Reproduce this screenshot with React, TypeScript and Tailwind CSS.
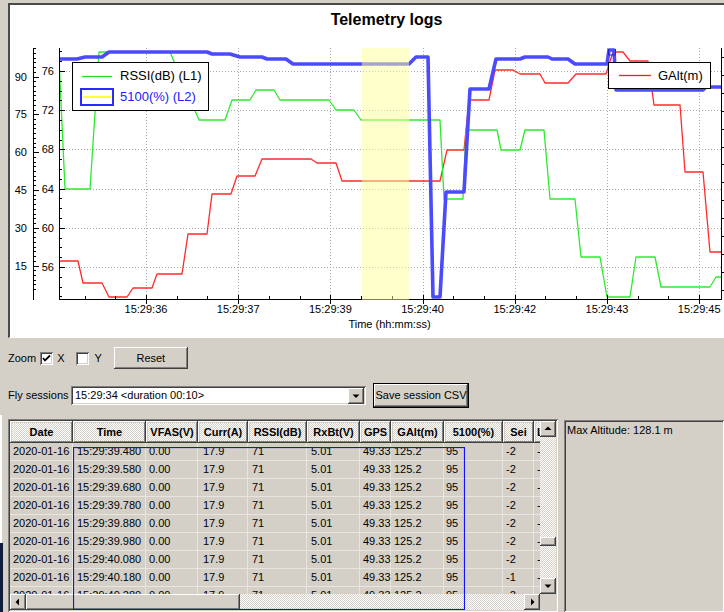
import React from "react";

const raised =
  "shadow-[inset_-1px_-1px_#404040,inset_1px_1px_#ffffff,inset_-2px_-2px_#808080,inset_2px_2px_#d4d0c8]";
const sunken =
  "shadow-[inset_1px_1px_#808080,inset_-1px_-1px_#ffffff,inset_2px_2px_#404040,inset_-2px_-2px_#d4d0c8]";
const checker =
  "bg-[image:repeating-conic-gradient(#ffffff_0_25%,#d4d0c8_0_50%)] bg-[length:2px_2px]";

// chart data, in page pixels
const bluePts =
  "59,59 77,59 85,57 102,57 109,52 207,52 212,54 230,54 240,57 262,57 267,59 286,59 293,64 409,64 416,57 428,57 433,297 440,297 446,192 464,192 470,89 489,89 496,59 520,59 525,57 548,57 552,59 568,59 575,64 607,64 609,50 614,50 616,90 703,90 706,87 724,87";
const greenPts =
  "59,59 65,189 90,189 99,52 170,52 199,120 225,120 232,100 250,100 256,90 274,90 280,100 329,100 336,110 354,110 361,120 440,120 444,199 463,199 466,130 497,130 501,150 520,150 525,130 544,130 550,199 575,199 581,257 600,257 607,297 630,297 636,257 655,257 661,287 710,287 716,277 724,277";
const redPts =
  "59,261 78,261 83,283 102,283 109,297 127,297 133,288 152,288 157,274 182,274 188,234 207,234 212,194 231,194 237,176 255,176 262,159 311,159 317,163 336,163 342,181 440,181 447,150 464,150 469,100 489,100 495,70 513,70 520,74 540,74 545,83 568,83 576,74 606,74 613,52 623,52 630,61 648,61 654,105 680,105 685,172 703,172 710,252 724,252";

const xLabels = ["15:29:36", "15:29:37", "15:29:39", "15:29:40", "15:29:42", "15:29:43", "15:29:45"];
const innerLabels = ["76", "72", "68", "64", "60", "56"];
const outerLabels = ["90", "75", "60", "45", "30", "15"];

const xTicks: { x: number; major: boolean }[] = [];
for (let i = -3; i <= 19; i++) {
  const x = 146 + i * 30.73;
  if (x >= 59 && x <= 721) xTicks.push({ x: Math.round(x) + 0.5, major: i % 3 === 0 });
}
const innerTicks: { y: number; major: boolean }[] = [];
for (let k = -3; k <= 24; k++) {
  const y = 71 + k * 9.8;
  if (y >= 48 && y <= 299) innerTicks.push({ y: Math.round(y) + 0.5, major: k % 4 === 0 });
}
const outerTicks: { y: number; major: boolean }[] = [];
for (let k = -8; k <= 45; k++) {
  const y = 76.5 + k * 4.725;
  if (y >= 48 && y <= 299) outerTicks.push({ y: Math.round(y) + 0.5, major: k % 8 === 0 });
}
const rightTicks: { y: number; major: boolean }[] = [];
for (let k = 0; k < 15; k++) {
  const y = 57 + k * 17.9;
  if (y <= 299) rightTicks.push({ y: Math.round(y) + 0.5, major: k % 3 === 0 });
}

function LegendLine({ color, width }: { color: string; width: number }) {
  return (
    <svg width={width} height={3} className="block">
      <line x1={0} x2={width} y1={1.5} y2={1.5} stroke={color} strokeWidth={1.3} />
    </svg>
  );
}

function Chart() {
  return (
    <div className="relative w-[755px] h-[335px] ml-[8px] bg-white border-t-2 border-l-2 border-b border-[#4a4a4a] border-b-white">
      <div className="h-[40px] pt-[6px] text-center text-[16px] leading-[18px] font-bold">Telemetry logs</div>
      <svg width={753} height={292} viewBox="10 45 753 292" className="block">
        <defs>
          <clipPath id="plot">
            <rect x={59} y={48} width={662} height={251} />
          </clipPath>
        </defs>
        <g stroke="#a8a8a8" strokeDasharray="1 2" shapeRendering="crispEdges">
          {innerLabels.map((_, i) => {
            const y = Math.round(71 + i * 39.2) + 0.5;
            return <line key={i} x1={60} x2={721} y1={y} y2={y} />;
          })}
          {xLabels.map((_, i) => {
            const x = Math.round(146 + i * 92.2) + 0.5;
            return <line key={i} x1={x} x2={x} y1={48} y2={299} />;
          })}
        </g>
        <g clipPath="url(#plot)" fill="none" strokeLinejoin="round">
          <polyline points={redPts} stroke="#ff2b2b" strokeWidth={1.3} />
          <polyline points={greenPts} stroke="#2eea2e" strokeWidth={1.3} />
          <polyline points={bluePts} stroke="#4a4aff" strokeWidth={3.6} />
        </g>
        <path d="M608.5 49v6h7v-6" stroke="#2020e0" fill="none" />

        {/* axes */}
        <g stroke="#000" shapeRendering="crispEdges">
          <line x1={59.5} x2={59.5} y1={48} y2={300} />
          {innerTicks.map((t, i) => (
            <line key={i} x1={59} x2={t.major ? 65 : 62} y1={t.y} y2={t.y} />
          ))}
          <line x1={33.5} x2={33.5} y1={48} y2={300} />
          {outerTicks.map((t, i) => (
            <line key={i} x1={33} x2={t.major ? 39 : 36} y1={t.y} y2={t.y} />
          ))}
          <line x1={59} x2={722} y1={299.5} y2={299.5} />
          {xTicks.map((t, i) => (
            <line key={i} x1={t.x} x2={t.x} y1={t.major ? 295 : 296} y2={t.major ? 304 : 299} />
          ))}
          <line x1={721.5} x2={721.5} y1={48} y2={300} />
          {rightTicks.map((t, i) => (
            <line key={i} x1={721} x2={t.major ? 728 : 725} y1={t.y} y2={t.y} />
          ))}
        </g>
        <g fontSize={11} fill="#000">
          {innerLabels.map((l, i) => (
            <text key={i} x={54} y={71 + i * 39.2 + 4} textAnchor="end">
              {l}
            </text>
          ))}
          {outerLabels.map((l, i) => (
            <text key={i} x={27} y={76.5 + i * 37.8 + 4} textAnchor="end">
              {l}
            </text>
          ))}
          {xLabels.map((l, i) => (
            <text key={i} x={146 + i * 92.2} y={313} textAnchor="middle">
              {l}
            </text>
          ))}
          <text x={389.5} y={328} textAnchor="middle">
            Time (hh:mm:ss)
          </text>
        </g>
        <rect x={362} y={48} width={47} height={252} fill="#ffff99" fillOpacity={0.5} />
      </svg>

      <div className="absolute left-[62px] top-[57px] w-[137px] h-[49px] border border-black bg-white pl-[7px] pt-[2px] text-[13px] leading-[16px]">
        <div className="flex items-center h-[22px]">
          <div className="w-[34px] flex justify-center">
            <LegendLine color="#22e622" width={30} />
          </div>
          <span className="ml-[6px]">RSSI(dB) (L1)</span>
        </div>
        <div className="flex items-center h-[20px]">
          <div className="w-[34px] h-[18px] border-2 border-[#2a2aff] flex items-center justify-center">
            <div className="w-[28px] h-[2px] bg-[#ffff33]" />
          </div>
          <span className="ml-[6px] text-[#2020ff]">5100(%) (L2)</span>
        </div>
      </div>

      <div className="absolute left-[598px] top-[57px] w-[103px] h-[27px] border border-black bg-white flex items-center pl-[10px] text-[13px]">
        <LegendLine color="#ff1a1a" width={32} />
        <span className="ml-[7px]">GAlt(m)</span>
      </div>
    </div>
  );
}

function Checkbox({ checked, className }: { checked?: boolean; className?: string }) {
  return (
    <div className={`w-[13px] h-[13px] bg-white ${sunken} ${className ?? ""}`}>
      {checked && (
        <svg width={13} height={13} viewBox="0 0 13 13">
          <polyline points="3,6 5,8.5 10,3.5" fill="none" stroke="#000" strokeWidth={1.8} />
        </svg>
      )}
    </div>
  );
}

function Arrow({ dir }: { dir: "up" | "down" | "left" | "right" }) {
  const pts = {
    up: "8,5.5 4.5,9 11.5,9",
    down: "4.5,6.5 11.5,6.5 8,10",
    left: "5.5,8 9,4.5 9,11.5",
    right: "10.5,8 7,4.5 7,11.5",
  }[dir];
  return (
    <div className={`w-[16px] h-[16px] shrink-0 bg-[#d4d0c8] ${raised}`}>
      <svg width={16} height={16} viewBox="0 0 16 16">
        <polygon points={pts} fill="#000" />
      </svg>
    </div>
  );
}

const cols = [
  { h: "Date", w: "w-[63px]", p: "pl-[3px]" },
  { h: "Time", w: "w-[73px]", p: "pl-[4px]" },
  { h: "VFAS(V)", w: "w-[52px]", p: "pl-[3px]" },
  { h: "Curr(A)", w: "w-[50px]", p: "pl-[5px]" },
  { h: "RSSI(dB)", w: "w-[59px]", p: "pl-[4px]" },
  { h: "RxBt(V)", w: "w-[53px]", p: "pl-[4px]" },
  { h: "GPS", w: "w-[31px]", p: "pl-[3px]" },
  { h: "GAlt(m)", w: "w-[53px]", p: "pl-[3px]" },
  { h: "5100(%)", w: "w-[59px]", p: "pl-[2px]" },
  { h: "Sei", w: "w-[31px]", p: "pl-[3px]" },
  { h: "Lat", w: "w-[40px]", p: "pl-[3px]" },
];

const samples = [
  ["15:29:39.480", "-2"],
  ["15:29:39.580", "-2"],
  ["15:29:39.680", "-2"],
  ["15:29:39.780", "-2"],
  ["15:29:39.880", "-2"],
  ["15:29:39.980", "-2"],
  ["15:29:40.080", "-2"],
  ["15:29:40.180", "-1"],
  ["15:29:40.280", "-2"],
];

function Table() {
  return (
    <div className={`relative w-[550px] h-[193px] p-[2px] ${sunken}`}>
      <div className="flex">
        <div className="w-[530px] h-[173px] overflow-hidden">
          <div className="flex h-[22px]">
            {cols.map((c, j) => (
              <div
                key={j}
                className={`${c.w} shrink-0 h-[22px] font-bold leading-[22px] whitespace-nowrap overflow-hidden ${checker} ${raised} ${
                  j === cols.length - 1 ? "pl-[3px]" : "text-center"
                }`}
              >
                {c.h}
              </div>
            ))}
          </div>
          {samples.map(([time, sei], r) => {
            const vals = ["2020-01-16", time, "0.00", "17.9", "71", "5.01", "49.33", "125.2", "95", sei, "-"];
            return (
              <div key={r} className="flex h-[18px]">
                {vals.map((v, j) => (
                  <div
                    key={j}
                    className={`${cols[j].w} ${cols[j].p} shrink-0 h-[18px] leading-[17px] whitespace-nowrap border-r border-b border-[#e8e5df]`}
                  >
                    {v}
                  </div>
                ))}
              </div>
            );
          })}
        </div>
        <div className="w-[16px] h-[173px] flex flex-col">
          <Arrow dir="up" />
          <div className={`relative flex-1 ${checker}`}>
            <div className={`absolute left-0 top-[100px] w-[16px] h-[9px] bg-[#d4d0c8] ${raised}`} />
          </div>
          <Arrow dir="down" />
        </div>
      </div>
      <div className="flex h-[16px]">
        <Arrow dir="left" />
        <div className={`w-[214px] h-[16px] bg-[#d4d0c8] ${raised}`} />
        <div className={`w-[284px] h-[16px] ${checker}`} />
        <Arrow dir="right" />
        <div className="w-[16px] h-[16px] bg-[#d4d0c8]" />
      </div>
      {/* selection outline */}
      <svg width={392} height={163} className="absolute left-[65px] top-[28px] pointer-events-none">
        <rect x={0.5} y={0.5} width={391} height={162} fill="none" stroke="#1010ff" strokeWidth={1.2} />
      </svg>
    </div>
  );
}

export default function App() {
  return (
    <div className="relative w-[724px] h-[612px] overflow-hidden bg-[#d4d0c8] pt-[3px] font-['Liberation_Sans',Arial,sans-serif] text-[11px] text-black">
      <Chart />

      <div className="mt-[9px] pl-[8px] flex items-center h-[22px]">
        <span>Zoom</span>
        <Checkbox checked className="ml-[4px]" />
        <span className="ml-[4px]">X</span>
        <Checkbox className="ml-[12px]" />
        <span className="ml-[5px]">Y</span>
        <button className={`ml-[12px] w-[74px] h-[22px] bg-[#d4d0c8] ${raised}`}>Reset</button>
      </div>

      <div className="mt-[14px] pl-[8px] flex items-center h-[25px]">
        <span className="w-[63px] whitespace-nowrap">Fly sessions</span>
        <div className={`relative w-[295px] h-[19px] bg-white pl-[4px] leading-[19px] ${sunken}`}>
          {"15:29:34 <duration 00:10>"}
          <div className="absolute right-[2px] top-[2px]">
            <Arrow dir="down" />
          </div>
        </div>
        <button className={`ml-[7px] w-[96px] h-[25px] bg-[#d4d0c8] border border-black ${raised}`}>
          Save session CSV
        </button>
      </div>

      <div className="mt-[11px] pl-[8px] flex">
        <Table />
        <div className={`mt-[1px] ml-[6px] flex-1 h-[192px] pl-[3px] pt-[3px] leading-[14px] ${sunken}`}>
          Max Altitude: 128.1 m
        </div>
      </div>

      <div className="absolute left-0 top-[415px] w-[2px] h-[128px] bg-white" />
      <div className="absolute left-0 top-[543px] w-[3px] h-[69px] bg-[#101c3c]" />
    </div>
  );
}
